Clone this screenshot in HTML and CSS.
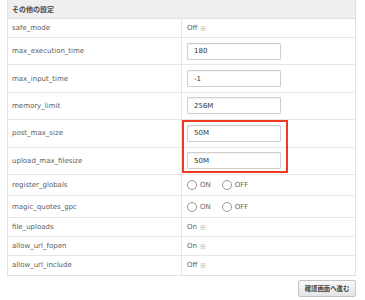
FILE: index.html
```html
<!DOCTYPE html>
<html lang="ja">
<head>
<meta charset="utf-8">
<link rel="stylesheet" href="styles.css">
</head>
<body>
<div class="page">
  <div class="table">
    <div class="head">その他の設定</div>
    <div class="row r-text"><div class="key">safe_mode</div><div class="val">Off <span class="note">※</span></div></div>
    <div class="row r-input"><div class="key">max_execution_time</div><div class="val"><span class="field">180</span></div></div>
    <div class="row r-input"><div class="key">max_input_time</div><div class="val"><span class="field">-1</span></div></div>
    <div class="row r-input"><div class="key">memory_limit</div><div class="val"><span class="field">256M</span></div></div>
    <div class="group">
      <div class="row r-input"><div class="key">post_max_size</div><div class="val"><span class="field">50M</span></div></div>
      <div class="row r-input"><div class="key">upload_max_filesize</div><div class="val"><span class="field">50M</span></div></div>
      <div class="highlight"></div>
    </div>
    <div class="row r-radio"><div class="key">register_globals</div><div class="val radios"><span class="opt"><span class="dot"></span>ON</span><span class="opt"><span class="dot"></span>OFF</span></div></div>
    <div class="row r-radio"><div class="key">magic_quotes_gpc</div><div class="val radios"><span class="opt"><span class="dot"></span>ON</span><span class="opt"><span class="dot"></span>OFF</span></div></div>
    <div class="row r-text"><div class="key">file_uploads</div><div class="val">On <span class="note">※</span></div></div>
    <div class="row r-text"><div class="key">allow_url_fopen</div><div class="val">On <span class="note">※</span></div></div>
    <div class="row r-text last"><div class="key">allow_url_include</div><div class="val">Off <span class="note">※</span></div></div>
  </div>
  <div class="actions"><button class="btn" type="button">確認画面へ進む</button></div>
</div>
</body>
</html>
```
FILE: styles.css
```css
html, body {
  margin: 0;
  padding: 0;
  background: #fff;
}
body {
  font-family: "DejaVu Sans", "Noto Sans CJK JP", sans-serif;
  font-size: 7px;
  color: #5e5e5e;
}
.page {
  width: 349px;
  padding-left: 7px;
}
.table {
  border: 1px solid #e2e2e2;
  border-top: none;
  box-sizing: border-box;
}
.head {
  height: 19px;
  box-sizing: border-box;
  background: #efefef;
  border-bottom: 1px solid #e2e2e2;
  display: flex;
  align-items: center;
  padding-left: 4px;
  font-weight: bold;
  color: #4a4a4a;
  font-size: 7px;
}
.row {
  display: grid;
  grid-template-columns: 174px 1fr;
  box-sizing: border-box;
  border-bottom: 1px solid #e6e6e6;
}
.row.last { border-bottom: none; }
.r-text { height: 19px; }
.r-input { height: 27.4px; }
.r-radio { height: 21.5px; }
.key {
  display: flex;
  align-items: center;
  padding-left: 4px;
  border-right: 1px solid #e6e6e6;
}
.val {
  display: flex;
  align-items: center;
  padding-left: 5px;
  white-space: pre;
}
.note {
  color: #a0a0a0;
  font-family: "Noto Sans CJK JP", sans-serif;
}
.field {
  width: 94px;
  height: 17px;
  box-sizing: border-box;
  border: 1px solid #cfcfcf;
  border-radius: 1px;
  box-shadow: inset 0 1px 1px rgba(0,0,0,0.06);
  display: flex;
  align-items: center;
  padding-left: 6px;
  color: #333;
}
.group { position: relative; }
.highlight {
  position: absolute;
  left: 174px;
  top: 0;
  width: 106px;
  height: 53px;
  box-sizing: border-box;
  border: 2px solid #ee3a22;
}
.radios { gap: 11px; }
.opt {
  display: flex;
  align-items: center;
  gap: 3px;
  color: #666;
}
.dot {
  width: 10px;
  height: 10px;
  box-sizing: border-box;
  border: 1px solid #9a9a9a;
  border-radius: 50%;
  background: #fff;
}
.actions {
  display: flex;
  justify-content: flex-end;
  padding-top: 4px;
}
.btn {
  width: 58px;
  height: 17px;
  margin-right: 0;
  padding: 0;
  font-family: "Noto Sans CJK JP", sans-serif;
  font-size: 6.4px;
  font-weight: bold;
  color: #444;
  border: 1px solid #c4c4c4;
  border-radius: 2px;
  background: linear-gradient(#f9f9f9, #e4e4e4);
}
```
